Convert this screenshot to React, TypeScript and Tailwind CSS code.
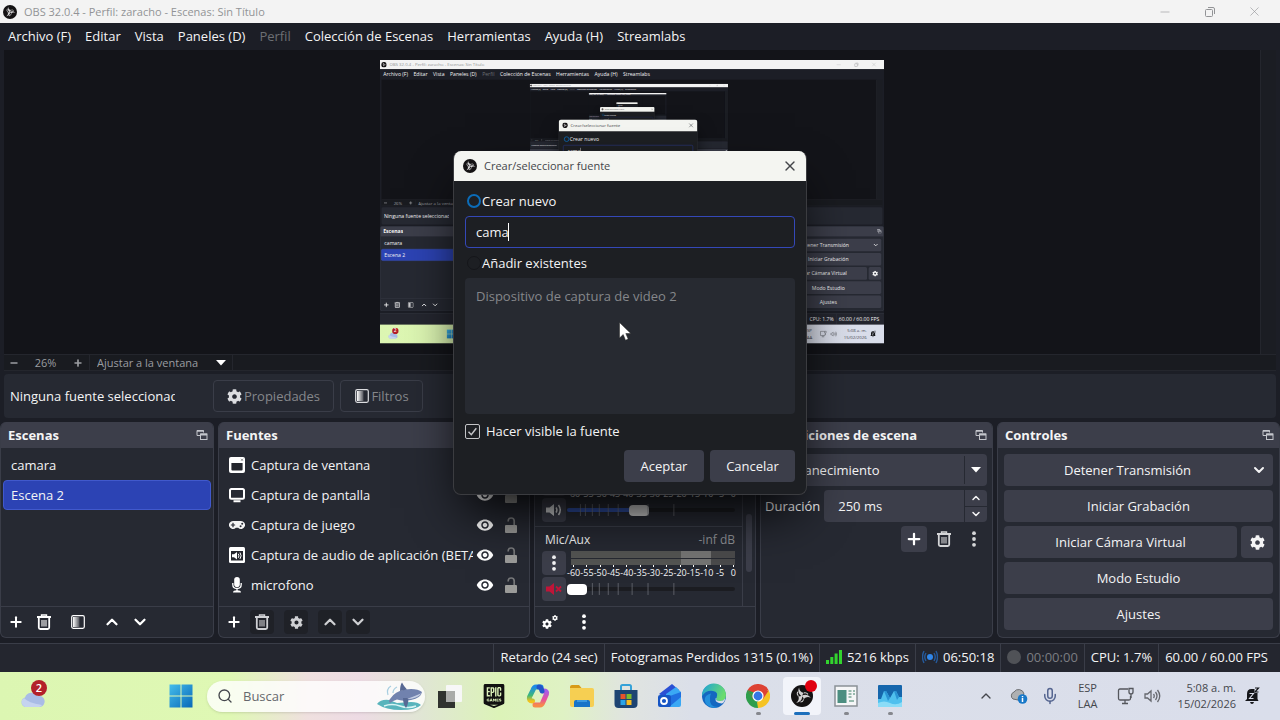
import { useId, useState } from 'react';
import type { ReactNode } from 'react';
import { FaCog, FaGamepad } from 'react-icons/fa';
import { MdVisibility } from 'react-icons/md';
import { SiEpicgames } from 'react-icons/si';
import { ChevronDown, ChevronUp, Mic, Minus, Plus, Search, X } from 'lucide-react';
import clsx from 'clsx';

const MENU = [
  'Archivo (F)',
  'Editar',
  'Vista',
  'Paneles (D)',
  'Perfil',
  'Colección de Escenas',
  'Herramientas',
  'Ayuda (H)',
  'Streamlabs',
];

const DB_LABELS = ['-60', '-55', '-50', '-45', '-40', '-35', '-30', '-25', '-20', '-15', '-10', '-5', '0'];
const FADER_TICKS = [13, 18, 25, 32, 41, 51, 65, 81, 107];

// ---------- icons ----------

function ObsLogo({ className }: { className: string }) {
  return (
    <svg viewBox="0 0 24 24" className={className}>
      <circle cx="12" cy="12" r="12" fill="#141213" />
      {[0, 120, 240].map((angle) => (
        <g key={angle} transform={`rotate(${angle} 12 12)`}>
          <path d="M12.300 12.500C8.500 10.500 7 7 8.800 2.800 9 5.800 10.500 8 14.200 8.600 12.800 9.400 12.200 10.600 12.300 12.500z" fill="#d3d2d3" />
          <path d="M14.200 8.600q2.800-.600 4.300 1.600" fill="none" stroke="#d3d2d3" strokeWidth="1.200" />
        </g>
      ))}
    </svg>
  );
}

function TrashIcon() {
  return (
    <svg viewBox="0 0 16 16" className="size-4" fill="none" stroke="currentColor">
      <path d="M1 3h14" strokeWidth="2" />
      <path d="M5.5 2V1h5v1" strokeWidth="1.4" />
      <path d="M2.8 4v9.5q0 1.5 1.5 1.5h7.4q1.5 0 1.5-1.5V4" strokeWidth="1.8" />
      <path d="M6 6v6.5M8 6v6.5M10 6v6.5" strokeWidth="1.1" />
    </svg>
  );
}

function FilterIcon() {
  const id = useId();
  return (
    <svg viewBox="0 0 16 16" className="size-4">
      <defs>
        <linearGradient id={id}>
          <stop offset="0" stopColor="#fff" />
          <stop offset="1" stopColor="#fff" stopOpacity="0.2" />
        </linearGradient>
      </defs>
      <rect x="1.7" y="1.7" width="12.6" height="12.6" rx="1.5" fill="none" stroke="currentColor" strokeWidth="1.2" />
      <rect x="3" y="3" width="6.5" height="10" fill={`url(#${id})`} />
    </svg>
  );
}

function DotsIcon() {
  return (
    <svg viewBox="0 0 16 16" className="size-4" fill="currentColor">
      <circle cx="8" cy="2.2" r="1.9" />
      <circle cx="8" cy="8" r="1.9" />
      <circle cx="8" cy="13.8" r="1.9" />
    </svg>
  );
}

function GearsIcon() {
  return (
    <span className="flex">
      <FaCog className="mt-1 size-[10px]" />
      <FaCog className="size-[6px]" />
    </span>
  );
}

function FloatIcon() {
  return (
    <svg viewBox="0 0 12 12" className="size-3" fill="none" stroke="#c4c6cc">
      <path d="M4 6.5H1V1.5h6.5v2" />
      <path d="M1 2h6.5" strokeWidth="1.5" />
      <rect x="4.5" y="5" width="6.5" height="5.5" />
      <path d="M4.5 5.5H11" strokeWidth="2" />
    </svg>
  );
}

function CaretIcon() {
  return (
    <svg viewBox="0 0 10 6" className="h-[6px] w-[10px]" fill="#fff">
      <path d="M0 0h10L5 5.6z" />
    </svg>
  );
}

function WindowIcon() {
  return (
    <svg viewBox="0 0 16 16" className="size-4">
      <rect width="16" height="16" rx="2" fill="#fff" />
      <path d="M2.4 6h11.2v6.6q0 1-1 1H3.4q-1 0-1-1z" fill="#24262d" />
      <path d="M12 1.8l2 2M14 1.8l-2 2" stroke="#666" strokeWidth="0.7" />
    </svg>
  );
}

function MonitorIcon() {
  return (
    <svg viewBox="0 0 16 16" className="size-4" fill="none" stroke="#fff">
      <rect x="1" y="2" width="14" height="9.8" rx="1.5" strokeWidth="2" />
      <path d="M4.5 14.2h7" strokeWidth="2" />
    </svg>
  );
}

function AppAudioIcon() {
  return (
    <svg viewBox="0 0 16 16" className="size-4">
      <rect width="16" height="16" rx="1.5" fill="#fff" />
      <rect x="2" y="4" width="12" height="9.5" fill="#24262d" />
      <path d="M3 7.3h2l3-2.3v7.4L5 10.2H3z" fill="#fff" />
      <path d="M9.3 6.8q1.3 2 0 4M11 5.6q2.2 3.2 0 6.3" fill="none" stroke="#fff" />
    </svg>
  );
}

function MicIcon() {
  return (
    <svg viewBox="0 0 16 16" className="size-4">
      <rect x="5.2" y="0" width="5.6" height="10" rx="2.8" fill="#fff" />
      <path d="M3.8 6v1.5q0 4 4.2 4t4.2-4V6M8 11.5V14" fill="none" stroke="#fff" strokeWidth="1.3" />
      <path d="M4 15.500q0-2.300 4-2.300t4 2.300z" fill="#fff" />
    </svg>
  );
}

function UnlockIcon() {
  return (
    <svg viewBox="0 0 14 16" className="h-4 w-[14px] shrink-0">
      <rect x="1" y="8" width="12" height="8" rx="1" fill="#9b9b99" />
      <path d="M4.2 4.5V4q0-3 3-3t3 3v4" fill="none" stroke="#77787a" strokeWidth="1.7" />
    </svg>
  );
}

function SpeakerIcon({ muted }: { muted?: boolean }) {
  return (
    <svg viewBox="0 0 18 14" className="h-[14px] w-[18px]">
      <path d="M1 4.5h3.5L9 1v12L4.500 9.500H1z" fill={muted ? '#c01538' : '#d5d6d8'} />
      {muted ? (
        <path d="M11 4.500l5 5M16 4.500l-5 5" stroke="#c01538" strokeWidth="1.8" />
      ) : (
        <path d="M11 4.500q1.800 2.500 0 5M13.500 2q3.500 5 0 10" fill="none" stroke="#d5d6d8" strokeWidth="1.5" />
      )}
    </svg>
  );
}

// ---------- docks ----------

function Dock({ title, children }: { title: string; children: ReactNode }) {
  return (
    <section className="flex min-w-0 flex-col overflow-hidden rounded-md border-x border-b border-[#3a3d48] bg-[#262932]">
      <header className="flex h-[26px] shrink-0 items-center justify-between bg-[#3c3e4a] pr-[5px] pl-[7px]">
        <h2 className="truncate font-bold">{title}</h2>
        <button type="button" aria-label={`Desacoplar ${title}`}>
          <FloatIcon />
        </button>
      </header>
      {children}
    </section>
  );
}

function ToolButton({ label, disabled, children }: { label: string; disabled?: boolean; children: ReactNode }) {
  return (
    <button
      type="button"
      aria-label={label}
      disabled={disabled}
      className={clsx('flex size-6 items-center justify-center rounded-sm', disabled ? 'bg-[#1f2127] text-[#cfd0d3]' : 'text-white')}
    >
      {children}
    </button>
  );
}

function DockFooter({ children }: { children: ReactNode }) {
  return (
    <footer className="mt-auto flex h-[31px] shrink-0 items-center gap-[10px] border-t border-[#3a3d48] pl-[3px]">
      {children}
    </footer>
  );
}

function ScenesDock() {
  return (
    <Dock title="Escenas">
      <ul className="px-[2px] pt-[2px]">
        <li className="flex h-[30px] items-center px-2">camara</li>
        <li className="flex h-[30px] items-center rounded-sm border border-[#4159cc] bg-[#2c43b4] px-[7px]">Escena 2</li>
      </ul>
      <DockFooter>
        <div className="flex gap-1">
          <ToolButton label="Añadir escena"><Plus className="size-4" strokeWidth={3} /></ToolButton>
          <ToolButton label="Eliminar escena"><TrashIcon /></ToolButton>
        </div>
        <ToolButton label="Filtros de escena"><FilterIcon /></ToolButton>
        <div className="flex gap-1">
          <ToolButton label="Subir escena"><ChevronUp className="size-[18px]" strokeWidth={3} /></ToolButton>
          <ToolButton label="Bajar escena"><ChevronDown className="size-[18px]" strokeWidth={3} /></ToolButton>
        </div>
      </DockFooter>
    </Dock>
  );
}

const SOURCES = [
  { name: 'Captura de ventana', icon: <WindowIcon /> },
  { name: 'Captura de pantalla', icon: <MonitorIcon /> },
  { name: 'Captura de juego', icon: <FaGamepad className="size-4" /> },
  { name: 'Captura de audio de aplicación (BETA)', icon: <AppAudioIcon /> },
  { name: 'microfono', icon: <MicIcon /> },
];

function SourcesDock() {
  return (
    <Dock title="Fuentes">
      <ul className="pt-[2px] pr-[11px] pl-[10px]">
        {SOURCES.map((source) => (
          <li key={source.name} className="flex h-[30px] items-center">
            <span className="w-4 shrink-0">{source.icon}</span>
            <span className="ml-[6px] min-w-0 flex-1 overflow-hidden whitespace-nowrap">{source.name}</span>
            <button type="button" aria-label="Visibilidad" className="ml-[3px] text-white">
              <MdVisibility className="size-[18px]" />
            </button>
            <button type="button" aria-label="Bloquear" className="ml-[10px]">
              <UnlockIcon />
            </button>
          </li>
        ))}
      </ul>
      <DockFooter>
        <div className="flex gap-1">
          <ToolButton label="Añadir fuente"><Plus className="size-4" strokeWidth={3} /></ToolButton>
          <ToolButton label="Eliminar fuente" disabled><TrashIcon /></ToolButton>
        </div>
        <ToolButton label="Propiedades de fuente" disabled><FaCog className="size-[13px]" /></ToolButton>
        <div className="flex gap-1">
          <ToolButton label="Subir fuente" disabled><ChevronUp className="size-[18px]" strokeWidth={3} /></ToolButton>
          <ToolButton label="Bajar fuente" disabled><ChevronDown className="size-[18px]" strokeWidth={3} /></ToolButton>
        </div>
      </DockFooter>
    </Dock>
  );
}

function Channel({ name, level, initial, muted }: { name: string; level: string; initial: number; muted?: boolean }) {
  const [volume, setVolume] = useState(initial);
  const fill = muted ? '#1b1c21' : '#2f4ea3';

  return (
    <div className={clsx('h-[79px] pt-1 pr-[7px] pl-[7px]', !muted && 'border-b border-[#3a3d48]')}>
      <div className="mb-[2px] flex h-[18px] items-center justify-between pl-[3px] text-xs">
        <span>{name}</span>
        <span className="text-[#8f9196]">{level}</span>
      </div>
      <div className="flex gap-px">
        <div className="flex w-6 flex-col gap-[2px]">
          <button type="button" aria-label="Opciones" className="flex size-6 items-center justify-center rounded-sm bg-[#3c3e4a]">
            <DotsIcon />
          </button>
          <button type="button" aria-label="Silenciar" className="flex size-6 items-center justify-center rounded-sm bg-[#3c3e4a]">
            <SpeakerIcon muted={muted} />
          </button>
        </div>
        <div className="flex min-w-0 flex-1 flex-col">
          <div className="ml-1 flex h-[14px] flex-col gap-px">
            {[0, 1].map((bar) => (
              <div key={bar} className="flex flex-1">
                <div className="flex-[110] bg-[#535452]" />
                <div className="flex-[30] bg-[#747473]" />
                <div className="flex-[24] bg-[#4a4a4b]" />
              </div>
            ))}
          </div>
          <div className="-mr-[5px] flex h-3 text-[9px] whitespace-nowrap">
            {DB_LABELS.map((label) => (
              <span key={label} className="flex w-0 flex-1 flex-col items-center">
                <span className="h-[2px] w-px shrink-0 bg-white" />
                <span className="leading-[12px]">{label}</span>
              </span>
            ))}
          </div>
          <div className="relative flex h-6 items-center">
            <input
              type="range"
              aria-label={`Volumen ${name}`}
              min={0}
              max={100}
              value={volume}
              onChange={(e) => setVolume(Number(e.target.value))}
              style={{ backgroundImage: `linear-gradient(90deg, ${fill} ${volume}%, #1b1c21 ${volume}%)` }}
              className={clsx(
                'h-1 w-full appearance-none rounded-sm [&::-webkit-slider-thumb]:h-[11px] [&::-webkit-slider-thumb]:w-5 [&::-webkit-slider-thumb]:appearance-none [&::-webkit-slider-thumb]:rounded',
                muted ? '[&::-webkit-slider-thumb]:bg-white' : '[&::-webkit-slider-thumb]:bg-[#d2d2d2]',
              )}
            />
            <svg viewBox="0 0 169 12" className="pointer-events-none absolute inset-x-0 top-[6px] h-3 w-full" stroke="#73767d" strokeOpacity="0.7">
              {FADER_TICKS.filter((x) => (muted ? x > 20 : x < 60 || x > 80)).map((x) => (
                <path key={x} d={`M${x + 0.5} 0v12`} />
              ))}
            </svg>
          </div>
        </div>
      </div>
    </div>
  );
}

function MixerDock() {
  return (
    <Dock title="Mezclador de audio">
      <div className="flex">
        <div className="min-w-0 flex-1 border-r border-[#3a3d48]">
          <Channel name="Audio del escritorio" level="0.0 dB" initial={42} />
          <Channel name="Mic/Aux" level="-inf dB" initial={0} muted />
        </div>
        <div className="flex w-3 justify-center">
          <div className="mt-[66px] h-[58px] w-[6px] rounded-sm bg-[#3c3e4a]" />
        </div>
      </div>
      <DockFooter>
        <ToolButton label="Propiedades de audio"><GearsIcon /></ToolButton>
        <ToolButton label="Más opciones"><DotsIcon /></ToolButton>
      </DockFooter>
    </Dock>
  );
}

function TransitionsDock() {
  const id = useId();
  const button = 'flex h-[26px] w-[26px] items-center justify-center rounded';
  return (
    <Dock title="Transiciones de escena">
      <div className="flex flex-col gap-1 pt-[6px] pr-[5px] pl-1">
        <div className="relative">
          <select aria-label="Transición" className="h-8 w-full appearance-none rounded bg-[#3c3e4a] px-[10px]">
            <option>Desvanecimiento</option>
          </select>
          <span className="pointer-events-none absolute inset-y-[2px] right-0 flex w-[23px] items-center justify-center border-l border-[#262932]">
            <CaretIcon />
          </span>
        </div>
        <div className="flex items-center gap-1">
          <label htmlFor={id}>Duración</label>
          <div className="flex h-8 min-w-0 flex-1 overflow-hidden rounded bg-[#3c3e4a]">
            <input id={id} type="text" defaultValue="250 ms" className="w-0 flex-1 px-[14px]" />
            <div className="flex w-[23px] flex-col divide-y divide-[#262932] border-l border-[#262932]">
              <button type="button" aria-label="Aumentar" className="flex flex-1 items-center justify-center">
                <ChevronUp className="size-3" strokeWidth={3} />
              </button>
              <button type="button" aria-label="Disminuir" className="flex flex-1 items-center justify-center">
                <ChevronDown className="size-3" strokeWidth={3} />
              </button>
            </div>
          </div>
        </div>
        <div className="flex justify-end gap-1 text-[#d5d6d8]">
          <button type="button" aria-label="Añadir transición" className={clsx(button, 'bg-[#3c3e4a] text-white')}>
            <Plus className="size-[18px]" strokeWidth={3} />
          </button>
          <button type="button" aria-label="Eliminar transición" className={button}>
            <TrashIcon />
          </button>
          <button type="button" aria-label="Opciones de transición" className={button}>
            <DotsIcon />
          </button>
        </div>
      </div>
    </Dock>
  );
}

function ControlsDock() {
  const button = 'flex h-8 items-center justify-center rounded bg-[#3c3e4a]';
  return (
    <Dock title="Controles">
      <div className="flex flex-col gap-1 px-[6px] pt-[6px] pb-[7px]">
        <div className={clsx(button, 'pr-[6px]')}>
          <button type="button" className="h-full flex-1">Detener Transmisión</button>
          <button type="button" aria-label="Más opciones de transmisión">
            <ChevronDown className="size-4" strokeWidth={3} />
          </button>
        </div>
        <button type="button" className={button}>Iniciar Grabación</button>
        <div className="flex gap-1">
          <button type="button" className={clsx(button, 'flex-1')}>Iniciar Cámara Virtual</button>
          <button type="button" aria-label="Configurar cámara virtual" className={clsx(button, 'w-8')}>
            <FaCog className="size-[15px]" />
          </button>
        </div>
        <button type="button" className={button}>Modo Estudio</button>
        <button type="button" className={button}>Ajustes</button>
      </div>
    </Dock>
  );
}

// ---------- dialog ----------

function SourceDialog() {
  const id = useId();
  const [mode, setMode] = useState('new');
  const [name, setName] = useState('cama');

  return (
    <div
      role="dialog"
      aria-label="Crear/seleccionar fuente"
      className="absolute top-[151px] left-[453px] w-[354px] overflow-hidden rounded-lg border border-t-0 border-[#3b3c40] bg-[#1d1f23] shadow-2xl shadow-black"
    >
      <header className="flex h-[30px] items-center bg-[#f4f5f1] pr-2 pl-[9px] text-[11px] text-[#44464a]">
        <ObsLogo className="size-[14px]" />
        <span className="ml-[7px] flex-1">Crear/seleccionar fuente</span>
        <button type="button" aria-label="Cerrar">
          <X className="size-4" strokeWidth={2} />
        </button>
      </header>
      <form className="flex flex-col gap-[6px] px-[11px] pt-[11px] pb-3" onSubmit={(e) => e.preventDefault()}>
        <label className="flex h-[18px] items-center gap-px pl-[2px]">
          <input
            type="radio"
            name={`${id}-mode`}
            checked={mode === 'new'}
            onChange={() => setMode('new')}
            className="size-[14px] appearance-none rounded-full border-2 border-[#15161a] checked:border-[#0b6cb8]"
          />
          Crear nuevo
        </label>
        <div className="relative">
          <input
            type="text"
            aria-label="Nombre de la fuente"
            value={name}
            onChange={(e) => setName(e.target.value)}
            className="h-8 w-full rounded border border-[#3448b8] bg-[#1d1f23] px-[10px] outline-none"
          />
          <span className="absolute top-[7px] left-[43px] h-[18px] w-px bg-white" />
        </div>
        <label className="flex h-[18px] items-center gap-px pl-[2px]">
          <input
            type="radio"
            name={`${id}-mode`}
            checked={mode === 'existing'}
            onChange={() => setMode('existing')}
            className="size-[14px] appearance-none rounded-full border border-[#15161a] checked:border-[#0b6cb8]"
          />
          Añadir existentes
        </label>
        <ul className="h-[136px] rounded bg-[#272a31] px-[11px] pt-[9px] text-[#85878b]">
          <li>Dispositivo de captura de video 2</li>
        </ul>
        <label className="mt-[2px] flex h-[18px] items-center gap-[6px]">
          <span className="relative size-[15px]">
            <input type="checkbox" defaultChecked className="peer block size-[15px] appearance-none rounded-xs border border-[#c3c4c7]" />
            <svg viewBox="0 0 15 15" className="pointer-events-none absolute inset-0 hidden peer-checked:block" fill="none" stroke="#c3c4c7" strokeWidth="1.5">
              <path d="M3.500 7.800l2.800 2.900 5-6.500" />
            </svg>
          </span>
          Hacer visible la fuente
        </label>
        <div className="mt-1 flex justify-end gap-[6px]">
          <button type="submit" className="h-8 w-20 rounded bg-[#3c3e4a]">Aceptar</button>
          <button type="button" className="h-8 w-[85px] rounded bg-[#3c3e4a]">Cancelar</button>
        </div>
      </form>
    </div>
  );
}

// ---------- taskbar ----------

function WeatherIcon() {
  return (
    <svg viewBox="0 0 32 32" className="size-8">
      <path d="M8 27a5 5 0 0 1 0-9.500a7 7 0 0 1 12.500-1.500a5.600 5.600 0 0 1 3 11z" fill="#a9bce6" />
      <path d="M8 27a5 5 0 0 1-1-9q4 5 18 7q-1 2-3 2z" fill="#c5d3f0" />
      <circle cx="22" cy="8" r="8" fill="#b3202a" />
      <text x="22" y="12" textAnchor="middle" fontSize="11" fontWeight="600" fill="#fff">2</text>
    </svg>
  );
}

function WindowsIcon() {
  return (
    <svg viewBox="0 0 24 24" className="size-6">
      <defs>
        <linearGradient id="win-logo" x1="0" y1="0" x2="1" y2="1">
          <stop offset="0" stopColor="#45bdeb" />
          <stop offset="1" stopColor="#0868b8" />
        </linearGradient>
      </defs>
      <path d="M.5.500h11v11H.500zM12.500.500h11v11h-11zM.500 12.500h11v11H.500zM12.500 12.500h11v11h-11z" fill="url(#win-logo)" />
    </svg>
  );
}

function WhaleIcon() {
  return (
    <svg viewBox="0 0 46 28" className="h-7 w-[46px]">
      <path d="M1 22q4-5 12-4l8 3 14-1q7 0 10 3-5 5-20 5T1 22z" fill="#58b4bc" />
      <path d="M8 24q8-3 16 0t16 0" fill="none" stroke="#d8f4f4" strokeWidth="1.500" />
      <path d="M14 17q5-8 15-9.500 12-1.500 17 2.500-1 6-11 8-9 1.500-14-.500-4 1-7 3.500-2-2 0-4z" fill="#7182ae" />
      <path d="M24 9q0-6 2-8.500 2 4 5 7zM27 16q0 6 3 10 3-5 2-10z" fill="#586994" />
      <path d="M31 17q10 0 15-6-7 3-15 6z" fill="#c5cee3" />
      <path d="M12 13q-2-6 3-9M17 11q0-4 4-6" fill="none" stroke="#a8cee0" strokeWidth="1.200" />
    </svg>
  );
}

function TaskViewIcon() {
  return (
    <svg viewBox="0 0 26 26" className="size-[26px]">
      <rect x="1" y="8" width="17" height="17" fill="#30322f" />
      <rect x="9" y="2" width="16" height="17" rx="1" fill="#f7f7f7" />
      <rect x="9" y="8" width="9" height="11" fill="#aaaba9" />
    </svg>
  );
}

function CopilotIcon() {
  return (
    <svg viewBox="0 0 26 26" className="size-[26px]" fill="none" strokeLinejoin="round" strokeLinecap="round" strokeWidth="5">
      <defs>
        <linearGradient id="cop-a" x1="0" y1="0" x2="0" y2="1">
          <stop offset="0" stopColor="#1c8be8" />
          <stop offset="0.6" stopColor="#3cb878" />
          <stop offset="1" stopColor="#f3c31c" />
        </linearGradient>
        <linearGradient id="cop-b" x1="0" y1="0" x2="0" y2="1">
          <stop offset="0" stopColor="#a65ce8" />
          <stop offset="0.6" stopColor="#e8509c" />
          <stop offset="1" stopColor="#f68a4a" />
        </linearGradient>
      </defs>
      <path d="M16 4h-5q-2 0-3 3L4.500 14q-1 4 3 4" stroke="url(#cop-a)" />
      <path d="M10 22h5q2 0 3-3l3.500-8q1-3-3-3" stroke="url(#cop-b)" />
      <path d="M14 4q2 0 3 4" stroke="#2255c8" />
    </svg>
  );
}

function FolderIcon() {
  return (
    <svg viewBox="0 0 26 26" className="size-[26px]">
      <path d="M1 4q0-2 2-2h7l2.500 3H1z" fill="#d89b17" />
      <path d="M1 5h22q2 0 2 2v15q0 2-2 2H3q-2 0-2-2z" fill="#f6cf52" />
      <path d="M5 24v-5q0-2 2-2h12q2 0 2 2v5z" fill="#1874c8" />
      <path d="M8 17h10v2H8z" fill="#3a98e0" />
    </svg>
  );
}

function StoreIcon() {
  return (
    <svg viewBox="0 0 26 26" className="size-[26px]">
      <path d="M8 7V3.500Q8 2 9.500 2h7Q18 2 18 3.500V7" fill="none" stroke="#35a2d8" strokeWidth="2" />
      <path d="M1.500 7h23v14q0 4-4 4h-15q-4 0-4-4z" fill="#1d4472" />
      <path d="M7.500 11h5v5h-5z" fill="#e9532b" />
      <path d="M13.500 11h5v5h-5z" fill="#7fba2c" />
      <path d="M7.500 17h5v5h-5z" fill="#2aa4e8" />
      <path d="M13.500 17h5v5h-5z" fill="#f6bb21" />
    </svg>
  );
}

function CameraAppIcon() {
  return (
    <svg viewBox="0 0 26 26" className="size-[26px]">
      <path d="M2 11L15 1l7 6-12 9z" fill="#2a4fd4" />
      <path d="M9 11L19 4l5 5v13q0 2-2 2H9z" fill="#3aa8f4" />
      <path d="M10 14l14-5v5L12 24z" fill="#1f6fe0" />
      <rect x="1" y="12" width="13" height="12" rx="2" fill="#1655c4" />
      <circle cx="7" cy="18" r="3" fill="none" stroke="#fff" strokeWidth="1.800" />
    </svg>
  );
}

function EdgeIcon() {
  return (
    <svg viewBox="0 0 26 26" className="size-[26px]">
      <defs>
        <linearGradient id="edge-top" x1="0" y1="0" x2="1" y2="0.4">
          <stop offset="0" stopColor="#1ba0dc" />
          <stop offset="1" stopColor="#6bdc6e" />
        </linearGradient>
      </defs>
      <circle cx="13" cy="13" r="12" fill="#1467c0" />
      <path d="M1 13A12 12 0 0 1 25 12q0 6-6 6-5 0-3.500-3Q18 9 12 8 5 7 1 13z" fill="url(#edge-top)" />
      <path d="M9 15q-1 9 8 9-6 2-11-2-4-5-1-9 2-2 5-2.500Q9 12 9 15z" fill="#2390dc" />
      <path d="M15.500 15q-1.500 3 3.500 3 3.500 0 5-2.500 0 3.500-3 5-7-.500-6.500-5z" fill="#dadeeb" />
    </svg>
  );
}

function ChromeIcon() {
  return (
    <svg viewBox="0 0 24 24" className="size-6">
      <path d="M12 12L1.600 6A12 12 0 0 1 22.400 6z" fill="#dd4234" />
      <path d="M12 12L22.400 6A12 12 0 0 1 12 24z" fill="#f5c324" />
      <path d="M12 12v12A12 12 0 0 1 1.600 6z" fill="#2e9e4c" />
      <path d="M12 6.500h10.700L17 15zM7 15L1.600 6 12 6.500z" fill="#dd4234" />
      <path d="M7.200 14.700L1.600 6 9 9z" fill="#2e9e4c" />
      <path d="M16.800 14.700L12 24l-1-6z" fill="#f5c324" />
      <circle cx="12" cy="12" r="5.600" fill="#fff" />
      <circle cx="12" cy="12" r="4.400" fill="#3577e5" />
    </svg>
  );
}

function ObsTaskIcon() {
  return (
    <span className="relative">
      <ObsLogo className="size-[22px]" />
      <span className="absolute -top-[5px] -right-[4px] size-3 rounded-full bg-[#e00010]" />
    </span>
  );
}

function LayoutAppIcon() {
  return (
    <svg viewBox="0 0 24 22" className="h-[22px] w-6">
      <rect x="1" y="1" width="22" height="20" fill="#f5f6f7" stroke="#8a9196" strokeWidth="1.500" />
      <rect x="3.500" y="5" width="9" height="13" fill="#4c8e80" />
      <path d="M14.500 6h3M14.500 9h3M14.500 12h3M19 6h2M19 9h2M15 16h5" stroke="#7aa796" strokeWidth="1.500" />
    </svg>
  );
}

function WaveAppIcon() {
  return (
    <svg viewBox="0 0 24 22" className="h-[22px] w-6">
      <rect width="24" height="22" rx="1" fill="#1566ac" />
      <path d="M0 14h3L6 6h2l4 7 4-7h2l3 6h3v10H0z" fill="#4fc0ee" />
      <path d="M6 6h2l4 7-2 3zM16 6h2l3 6-2 3z" fill="#2a93d4" />
      <path d="M0 18q6-3 12 0t12-1v5H0z" fill="#8adcf7" />
    </svg>
  );
}

const TASKS: { name: string; icon: ReactNode; running?: boolean; active?: boolean }[] = [
  { name: 'Vista de tareas', icon: <TaskViewIcon /> },
  { name: 'Epic Games', icon: <SiEpicgames className="size-6 text-[#111]" /> },
  { name: 'Copilot', icon: <CopilotIcon /> },
  { name: 'Explorador de archivos', icon: <FolderIcon /> },
  { name: 'Microsoft Store', icon: <StoreIcon /> },
  { name: 'Cámara', icon: <CameraAppIcon /> },
  { name: 'Edge', icon: <EdgeIcon /> },
  { name: 'Chrome', icon: <ChromeIcon />, running: true },
  { name: 'OBS Studio', icon: <ObsTaskIcon />, active: true },
  { name: 'Diseño', icon: <LayoutAppIcon />, running: true },
  { name: 'Monitor', icon: <WaveAppIcon />, running: true },
];

function Taskbar() {
  return (
    <nav className="flex h-12 shrink-0 items-center bg-linear-[90deg,#dcf6b2_0%,#dff8b4_18%,#efe0df_24%,#eddbe4_28%,#e0e6d4_33%,#dcf3b8_39%,#dff2c4_44%,#e0e4e0_49%,#dbdfe9_54%,#dadeeb_100%] text-[#45474d]">
      <button type="button" aria-label="Widgets" className="flex w-[66px] justify-center">
        <WeatherIcon />
      </button>
      <button type="button" aria-label="Inicio" className="ml-[93px] flex w-11 justify-center">
        <WindowsIcon />
      </button>
      <label className="mr-[3px] ml-1 flex h-[31px] w-[218px] items-center rounded-full bg-white/80 pr-[3px] pl-[10px] shadow-sm">
        <Search className="size-4 shrink-0" strokeWidth={2} />
        <input type="text" placeholder="Buscar" aria-label="Buscar" className="ml-[10px] w-0 flex-1 text-[13px] placeholder:text-[#66686c]" />
        <WhaleIcon />
      </label>
      {TASKS.map((task) => (
        <button
          key={task.name}
          type="button"
          aria-label={task.name}
          className="relative flex h-12 w-11 items-center justify-center"
        >
          <span className={clsx('flex h-[38px] w-[38px] items-center justify-center rounded', task.active && 'bg-[#f2f4fa]')}>{task.icon}</span>
          {task.running && <span className="absolute bottom-[5px] h-[3px] w-[5px] rounded-full bg-[#85878d]" />}
          {task.active && <span className="absolute bottom-[5px] h-[3px] w-4 rounded-full bg-[#1c6fbc]" />}
        </button>
      ))}
      <div className="ml-auto flex items-center pr-[20px]">
        <ChevronUp className="size-4" strokeWidth={2} />
        <svg viewBox="0 0 18 18" className="ml-4 size-[18px]">
          <path d="M3 12a4 4 0 0 1 1-7 5.500 5.500 0 0 1 10 2l-6 6z" fill="#aeb0b2" stroke="#6b6d70" />
          <circle cx="12.500" cy="12" r="4.800" fill="#1878c8" />
          <path d="M12.500 11v4M12.500 9v1.200" stroke="#fff" strokeWidth="1.500" />
        </svg>
        <Mic className="ml-[13px] size-[18px] text-[#556590]" strokeWidth={2} />
        <div className="ml-[17px] w-6 text-center text-[11px] leading-4">
          <div>ESP</div>
          <div>LAA</div>
        </div>
        <svg viewBox="0 0 18 18" className="ml-[17px] size-[18px]" fill="none" stroke="#55575d" strokeWidth="1.300">
          <path d="M11 2H3q-1.500 0-1.500 1.500v8Q1.500 13 3 13h9q1.500 0 1.500-1.500V9M8 13v3M5 16.500h6" />
          <path d="M12 1.500h4v3.500q0 2-2 2t-2-2zM14 7v4" />
        </svg>
        <svg viewBox="0 0 18 18" className="ml-2 size-[18px]" fill="none" stroke="#66686e" strokeWidth="1.300">
          <path d="M2 7v4h2.500L8 14V4L4.500 7zM10.500 7q1.500 2 0 4M12.500 5q3 4 0 8M14.500 3q4.500 6 0 12" />
        </svg>
        <div className="ml-[17px] text-right text-[11px] leading-4">
          <div>5:08 a. m.</div>
          <div>15/02/2026</div>
        </div>
        <svg viewBox="0 0 16 18" className="ml-2 h-[18px] w-4" fill="#15161a">
          <path d="M3 12V7q0-5 4.500-5h3v4h3v6l1 2H1zM6 15h4q-.500 2-2 2t-2-2z" />
          <path d="M5.500 6.500h4l-4 5h4M11 1h3.500L11 5h3.500" fill="none" stroke="#dadeeb" strokeWidth="1.100" />
          <path d="M11 1h3.500L11 5h3.500" fill="none" stroke="#15161a" strokeWidth="1.200" />
        </svg>
      </div>
    </nav>
  );
}

// ---------- window ----------

function StatusBar() {
  const cell = 'flex items-center gap-[5px] border-l border-[#3a3d48] px-[6px] pb-[2px]';
  return (
    <footer className="mt-[5px] flex h-[29px] shrink-0 justify-end border-t border-[#3a3d48] bg-[#24262f] pr-[6px] whitespace-nowrap">
      <div className={cell}>Retardo (24 sec)</div>
      <div className={cell}>Fotogramas Perdidos 1315 (0.1%)</div>
      <div className={cell}>
        <svg viewBox="0 0 16 14" className="h-[14px] w-4" fill="#32d42e">
          <path d="M0 10h3v4H0zM4.300 7h3v7h-3zM8.600 3.500h3V14h-3zM13 0h3v14h-3z" />
        </svg>
        5216 kbps
      </div>
      <div className={cell}>
        <svg viewBox="0 0 16 14" className="h-[14px] w-4" fill="none" stroke="#255a9c" strokeWidth="1.400">
          <circle cx="8" cy="7" r="3" fill="#3187ea" stroke="none" />
          <path d="M4 3q-2.500 4 0 8M12 3q2.500 4 0 8M2 1q-3 6 0 12M14 1q3 6 0 12" />
        </svg>
        06:50:18
      </div>
      <div className={clsx(cell, 'text-[#7b7d82]')}>
        <span className="size-[14px] rounded-full bg-[#505257]" />
        00:00:00
      </div>
      <div className={cell}>CPU: 1.7%</div>
      <div className={cell}>60.00 / 60.00 FPS</div>
    </footer>
  );
}

// Shows the desktop inside itself, as a display capture of its own screen does
function DisplayCapture({ depth }: { depth: number }) {
  return (
    <div className="aspect-video w-[504px] overflow-hidden bg-[#131419]" aria-hidden="true" inert>
      {depth > 0 && (
        <div className="h-[720px] w-[1280px] origin-top-left scale-[0.39375]">
          <Desktop depth={depth - 1} />
        </div>
      )}
    </div>
  );
}

function Desktop({ depth }: { depth: number }) {
  return (
    <div className="relative flex h-full flex-col overflow-hidden bg-[#1c1e26] font-['Open_Sans',sans-serif] text-[13px] leading-[18px] text-[#f4f4f5]">
      <header className="flex h-[23px] shrink-0 items-center bg-[#f3f3f3] px-[3px] text-[11px] text-[#929396]">
        <ObsLogo className="size-[14px]" />
        <span className="ml-[7px] flex-1">OBS 32.0.4 - Perfil: zaracho - Escenas: Sin Título</span>
        <button type="button" aria-label="Minimizar" className="flex w-[45px] justify-center">
          <Minus className="size-[14px]" strokeWidth={1} />
        </button>
        <button type="button" aria-label="Restaurar" className="flex w-[45px] justify-center">
          <svg viewBox="0 0 12 12" className="size-3" fill="none" stroke="currentColor">
            <rect x="1.500" y="3.500" width="7" height="7" rx="1" />
            <path d="M4 1.500h5q1.500 0 1.500 1.500v5" />
          </svg>
        </button>
        <button type="button" aria-label="Cerrar ventana" className="flex w-[45px] justify-center">
          <X className="size-[15px]" strokeWidth={1} />
        </button>
      </header>

      <nav className="flex h-[27px] shrink-0 items-center gap-[14px] px-2 pb-[2px]">
        {MENU.map((item) => (
          <button key={item} type="button" disabled={item === 'Perfil'} className="disabled:text-[#6d6f74]">
            {item}
          </button>
        ))}
      </nav>

      <main className="mx-1 flex min-h-0 flex-1">
        <div className="flex flex-1 items-center justify-center bg-[#131419]">
          <DisplayCapture depth={depth} />
        </div>
        <div className="w-4 border-l border-[#24262d] bg-[#1b1d23]" />
      </main>

      <div className="mx-1 flex h-[17px] shrink-0 items-center border-y border-[#24262d] bg-[#191b20] text-[11px] text-[#9b9da1]">
        <button type="button" aria-label="Alejar" className="flex w-5 justify-center">
          <Minus className="size-[10px]" strokeWidth={4} />
        </button>
        <span className="w-[43px] text-center">26%</span>
        <button type="button" aria-label="Acercar" className="flex w-[22px] justify-center">
          <Plus className="size-[10px]" strokeWidth={4} />
        </button>
        <div className="relative border-x border-[#24262d]">
          <select aria-label="Escala de vista previa" className="block h-[15px] w-[142px] appearance-none px-[7px] leading-[15px]">
            <option>Ajustar a la ventana</option>
          </select>
          <span className="pointer-events-none absolute inset-y-0 right-0 flex w-[22px] items-center justify-center">
            <CaretIcon />
          </span>
        </div>
      </div>

      <div className="mx-1 mt-[3px] mb-1 flex h-11 shrink-0 items-center rounded bg-[#262932] px-[6px]">
        <span className="w-[165px] overflow-hidden whitespace-nowrap">Ninguna fuente seleccionada</span>
        <button type="button" disabled className="ml-[38px] flex h-8 w-[121px] items-center justify-center gap-[2px] rounded border border-[#3a3d48] text-[#85878b]">
          <FaCog className="size-[15px] text-[#dcdde0]" />
          Propiedades
        </button>
        <button type="button" disabled className="ml-[6px] flex h-8 w-[83px] items-center justify-center gap-px rounded border border-[#3a3d48] text-[#85878b]">
          <span className="text-[#dcdde0]"><FilterIcon /></span>
          Filtros
        </button>
      </div>

      <div className="grid shrink-0 grid-cols-[214fr_312fr_222fr_233fr_283fr] gap-1">
        <ScenesDock />
        <SourcesDock />
        <MixerDock />
        <TransitionsDock />
        <ControlsDock />
      </div>

      <StatusBar />
      <Taskbar />

      <SourceDialog />

      <svg viewBox="0 0 12 19" className="pointer-events-none absolute top-[322px] left-[619px] h-[19px] w-3">
        <path d="M.500.500v15.500l3.700-3.500 2.300 5.700 2.700-1.100-2.400-5.600h5z" fill="#fff" stroke="#222" strokeWidth="0.500" />
      </svg>
    </div>
  );
}

export default function App() {
  return (
    <div className="h-screen">
      <Desktop depth={3} />
    </div>
  );
}
